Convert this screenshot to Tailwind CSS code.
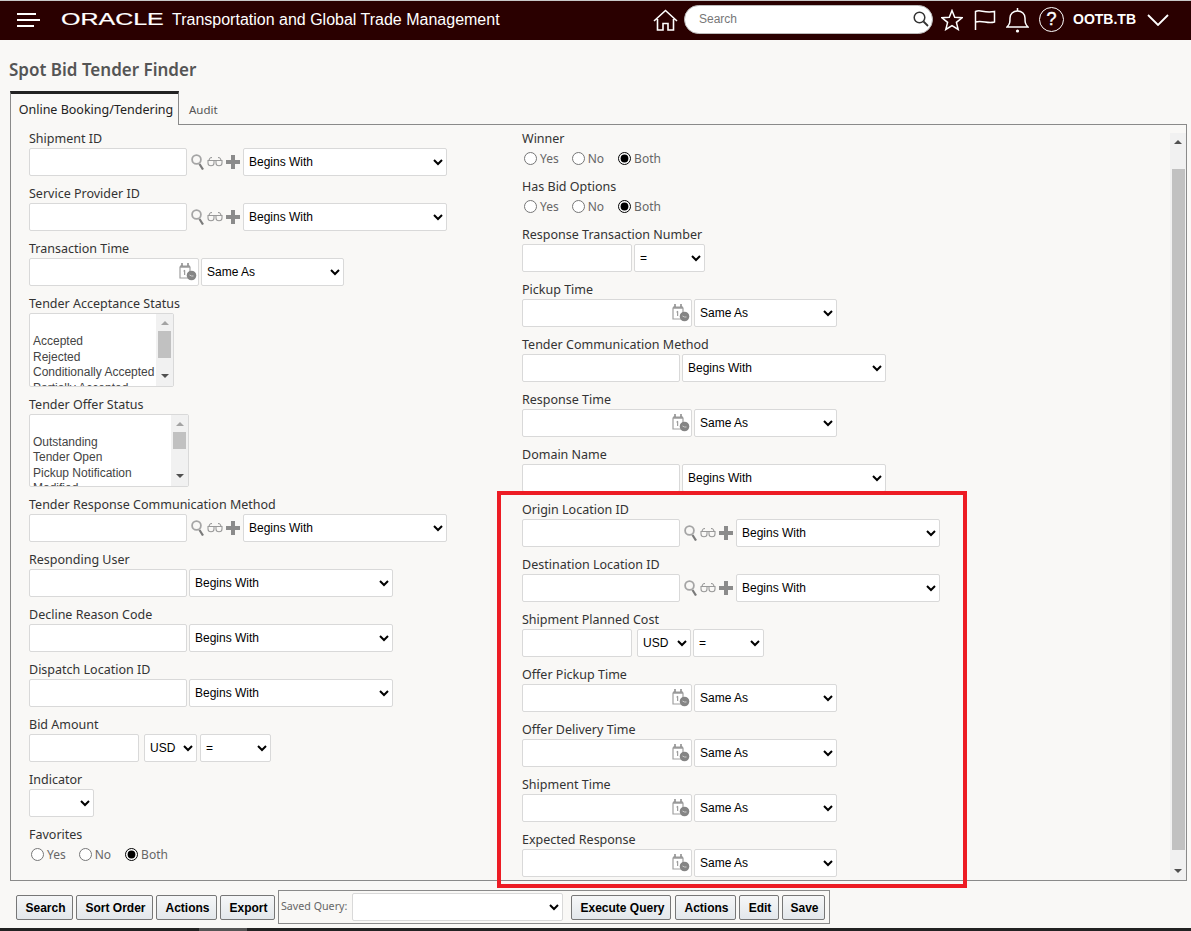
<!DOCTYPE html>
<html lang="en">
<head>
  <meta charset="UTF-8" />
  <title>Spot Bid Tender Finder</title>
  <script src="https://cdn.jsdelivr.net/npm/@tailwindcss/browser@4"></script>
</head>
<body class="bg-[#f9f8f6] font-['Noto_Sans',sans-serif] text-[12.5px] text-[#333]">
  <!-- shared icons -->
  <svg class="hidden">
    <symbol id="i-mag" viewBox="0 0 13 16"><circle cx="5.5" cy="5.5" r="4.4" fill="none" stroke="#a5a5a5" stroke-width="1.800"/><path d="M8.500 10l3.500 5.500" stroke="#7a7a7a" stroke-width="2.200"/></symbol>
    <symbol id="i-glasses" viewBox="0 0 16 10"><path d="M.5 3.500h15M2 3.500c0-1.500 1.500-3 3-3M14 3.500c0-1.500-1.500-3-3-3M1 3.500h6v2.500c0 3.700-6 3.700-6 0zM9 3.500h6v2.500c0 3.700-6 3.700-6 0z" fill="none" stroke="#9a9a9a" stroke-width="1.100"/></symbol>
    <symbol id="i-plus" viewBox="0 0 14 14"><path d="M5 0h4v5h5v4H9v5H5V9H0V5h5z" fill="#8b8b8b"/></symbol>
    <symbol id="i-cal" viewBox="0 0 18 18"><path d="M1 4h10v11H1z" fill="none" stroke="#a0a0a0" stroke-width="1.200"/><path d="M1 2.500h10v2H1z" fill="#999"/><path d="M3 0v3M9 0v3" stroke="#888" stroke-width="1.500"/><path d="M4.500 8l1.200-.7V12" fill="none" stroke="#888"/><circle cx="12.500" cy="12.500" r="4.800" fill="#858585"/><path d="M10.500 12l2 1h2" fill="none" stroke="#ccc"/></symbol>
  </svg>

  <div class="relative flex h-[931px] flex-col overflow-hidden">
    <!-- Header -->
    <header class="flex h-[40px] shrink-0 items-center border-t border-[#c8c8c8] bg-[#2a0000] pb-[2px] text-white">
      <svg class="ml-[17px] h-[16px] w-[23px]" viewBox="0 0 23 16"><path d="M0 2h19M0 8h23M0 14h17" stroke="#fff" stroke-width="2"/></svg>
      <div class="ml-[21px] w-[103px] font-['Liberation_Sans',sans-serif] text-[17px] leading-none [-webkit-text-stroke:0.2px_white]"><span class="inline-block origin-left scale-x-[1.47]">ORACLE</span></div>
      <div class="ml-[8px] font-['Liberation_Sans',sans-serif] text-[16px]">Transportation and Global Trade Management</div>
      <svg class="ml-auto h-[22px] w-[25px]" viewBox="0 0 25 22"><path d="M1 12L12.500 1.500 24 12M4.500 10v11h5.500v-6.500h5V21h5.500V10" fill="none" stroke="#fff" stroke-width="1.600"/></svg>
      <div class="ml-[6px] flex h-[29px] w-[249px] items-center rounded-full border border-[#bbb] bg-white pb-[1px] pl-[14px] pr-[3px] font-['Liberation_Sans',sans-serif] text-[12px] text-[#777]">
        Search
        <svg class="ml-auto h-[16px] w-[16px]" viewBox="0 0 16 16"><circle cx="6.500" cy="6.500" r="5.300" fill="none" stroke="#333" stroke-width="1.500"/><path d="M10.500 10.500l4.500 4.500" stroke="#333" stroke-width="1.800"/></svg>
      </div>
      <svg class="ml-[8px] h-[22px] w-[22px]" viewBox="0 0 22 22"><path d="M11 1.500l2.700 6.800 7.300.5-5.600 4.600 1.800 7.100-6.200-3.900-6.200 3.900 1.800-7.100L1 8.800l7.300-.5z" fill="none" stroke="#fff" stroke-width="1.500"/></svg>
      <svg class="ml-[11px] h-[22px] w-[22px]" viewBox="0 0 22 22"><path d="M1.500 21V2.500c5-2.500 7.500 1.800 19 0V13c-7 2-12-2-19 0" fill="none" stroke="#fff" stroke-width="1.500"/></svg>
      <svg class="ml-[10px] h-[26px] w-[23px]" viewBox="0 0 23 26"><path d="M1 20c3-3 3-5 3-9 0-4 3-7 7.500-7s7.500 3 7.500 7c0 4 0 6 3 9z" fill="none" stroke="#fff" stroke-width="1.500"/><path d="M11.500 1v3" stroke="#fff" stroke-width="1.500"/><circle cx="11.500" cy="24" r="1.600" fill="#fff"/></svg>
      <div class="ml-[10px] flex h-[25px] w-[25px] items-center justify-center rounded-full border-[1.500px] border-white font-['Liberation_Sans',sans-serif] text-[18px] [-webkit-text-stroke:0.4px_white]">?</div>
      <div class="ml-[9px] font-['Liberation_Sans',sans-serif] text-[14px] font-bold">OOTB.TB</div>
      <svg class="ml-[11px] mr-[22px] h-[12px] w-[22px]" viewBox="0 0 22 12"><path d="M1 1l10 10L21 1" fill="none" stroke="#fff" stroke-width="1.800"/></svg>
    </header>

    <!-- Title -->
    <h1 class="flex h-[51px] shrink-0 items-center pl-[9px] pt-[8px] text-[17px] font-semibold text-[#555]">Spot Bid Tender Finder</h1>

    <!-- Tabs -->
    <div class="relative z-10 -mb-px flex h-[34px] shrink-0 pl-[10px]">
      <div class="flex w-[169px] items-center justify-center border-x border-t-[3px] border-x-[#8a8a8a] border-t-[#222] bg-[#f9f8f6] pl-[3px] pt-[2px] text-[#222]">Online Booking/Tendering</div>
      <div class="flex items-center pl-[10px] pt-[4px] text-[11.5px] text-[#555]">Audit</div>
    </div>

    <!-- Form panel -->
    <main class="ml-[10px] flex h-[757px] w-[1177px] shrink-0 border border-[#8a8a8a]">
      <div class="flex flex-1 pl-[18px] pt-[3px]">
        <!-- left column -->
        <div class="w-[493px]">
          <div class="mb-[7px]">
            <label class="block h-5 leading-[22px]">Shipment ID</label>
            <div class="flex items-center">
              <input class="h-7 w-[158px] rounded-[2px] border border-[#d9d9d9] bg-white" />
              <svg class="ml-[4px] h-[16px] w-[13px]"><use href="#i-mag"/></svg>
              <svg class="ml-[3px] h-[10px] w-[16px]"><use href="#i-glasses"/></svg>
              <svg class="ml-[3px] h-[14px] w-[14px]"><use href="#i-plus"/></svg>
              <select class="ml-[3px] h-7 w-[204px] rounded-[2px] border border-[#d9d9d9] bg-white pl-[1px] font-['Liberation_Sans',sans-serif] text-[12px] text-black"><option>Begins With</option></select>
            </div>
          </div>
          <div class="mb-[7px]">
            <label class="block h-5 leading-[22px]">Service Provider ID</label>
            <div class="flex items-center">
              <input class="h-7 w-[158px] rounded-[2px] border border-[#d9d9d9] bg-white" />
              <svg class="ml-[4px] h-[16px] w-[13px]"><use href="#i-mag"/></svg>
              <svg class="ml-[3px] h-[10px] w-[16px]"><use href="#i-glasses"/></svg>
              <svg class="ml-[3px] h-[14px] w-[14px]"><use href="#i-plus"/></svg>
              <select class="ml-[3px] h-7 w-[204px] rounded-[2px] border border-[#d9d9d9] bg-white pl-[1px] font-['Liberation_Sans',sans-serif] text-[12px] text-black"><option>Begins With</option></select>
            </div>
          </div>
          <div class="mb-[7px]">
            <label class="block h-5 leading-[22px]">Transaction Time</label>
            <div class="flex items-center">
              <div class="relative">
                <input class="block h-7 w-[170px] rounded-[2px] border border-[#d9d9d9] bg-white" />
                <svg class="absolute right-[2px] top-[5px] h-[18px] w-[18px]"><use href="#i-cal"/></svg>
              </div>
              <select class="ml-[2px] h-7 w-[143px] rounded-[2px] border border-[#d9d9d9] bg-white pl-[1px] font-['Liberation_Sans',sans-serif] text-[12px] text-black"><option>Same As</option></select>
            </div>
          </div>
          <div class="mb-[7px]">
            <label class="block h-5 leading-[22px]">Tender Acceptance Status</label>
            <div class="flex h-[74px] w-[145px] overflow-hidden rounded-[2px] border border-[#d9d9d9] bg-white font-['Liberation_Sans',sans-serif] text-[12px] leading-[15.500px] text-[#444]">
              <div class="flex-1 pl-[3px] pt-[20px]">
                <div>Accepted</div>
                <div>Rejected</div>
                <div class="whitespace-nowrap">Conditionally Accepted</div>
                <div>Partially Accepted</div>
              </div>
              <div class="flex w-[17px] shrink-0 flex-col items-center bg-[#f1f1f1]">
                <div class="mt-[7px] h-0 w-0 border-x-[4px] border-b-[4px] border-x-transparent border-b-[#a3a3a3]"></div>
                <div class="mt-[6px] h-[27px] w-[13px] bg-[#c1c1c1]"></div>
                <div class="mt-[16px] h-0 w-0 border-x-[4px] border-t-[4px] border-x-transparent border-t-[#505050]"></div>
              </div>
            </div>
          </div>
          <div class="mb-[7px]">
            <label class="block h-5 leading-[22px]">Tender Offer Status</label>
            <div class="flex h-[73px] w-[160px] overflow-hidden rounded-[2px] border border-[#d9d9d9] bg-white font-['Liberation_Sans',sans-serif] text-[12px] leading-[15.500px] text-[#444]">
              <div class="flex-1 pl-[3px] pt-[19.500px]">
                <div>Outstanding</div>
                <div>Tender Open</div>
                <div>Pickup Notification</div>
                <div>Modified</div>
              </div>
              <div class="flex w-[17px] shrink-0 flex-col items-center bg-[#f1f1f1]">
                <div class="mt-[7px] h-0 w-0 border-x-[4px] border-b-[4px] border-x-transparent border-b-[#a3a3a3]"></div>
                <div class="mt-[6px] h-[17px] w-[13px] bg-[#c1c1c1]"></div>
                <div class="mt-[25px] h-0 w-0 border-x-[4px] border-t-[4px] border-x-transparent border-t-[#505050]"></div>
              </div>
            </div>
          </div>
          <div class="mb-[7px]">
            <label class="block h-5 leading-[22px]">Tender Response Communication Method</label>
            <div class="flex items-center">
              <input class="h-7 w-[158px] rounded-[2px] border border-[#d9d9d9] bg-white" />
              <svg class="ml-[4px] h-[16px] w-[13px]"><use href="#i-mag"/></svg>
              <svg class="ml-[3px] h-[10px] w-[16px]"><use href="#i-glasses"/></svg>
              <svg class="ml-[3px] h-[14px] w-[14px]"><use href="#i-plus"/></svg>
              <select class="ml-[3px] h-7 w-[204px] rounded-[2px] border border-[#d9d9d9] bg-white pl-[1px] font-['Liberation_Sans',sans-serif] text-[12px] text-black"><option>Begins With</option></select>
            </div>
          </div>
          <div class="mb-[7px]">
            <label class="block h-5 leading-[22px]">Responding User</label>
            <div class="flex items-center">
              <input class="h-7 w-[158px] rounded-[2px] border border-[#d9d9d9] bg-white" />
              <select class="ml-[2px] h-7 w-[204px] rounded-[2px] border border-[#d9d9d9] bg-white pl-[1px] font-['Liberation_Sans',sans-serif] text-[12px] text-black"><option>Begins With</option></select>
            </div>
          </div>
          <div class="mb-[7px]">
            <label class="block h-5 leading-[22px]">Decline Reason Code</label>
            <div class="flex items-center">
              <input class="h-7 w-[158px] rounded-[2px] border border-[#d9d9d9] bg-white" />
              <select class="ml-[2px] h-7 w-[204px] rounded-[2px] border border-[#d9d9d9] bg-white pl-[1px] font-['Liberation_Sans',sans-serif] text-[12px] text-black"><option>Begins With</option></select>
            </div>
          </div>
          <div class="mb-[7px]">
            <label class="block h-5 leading-[22px]">Dispatch Location ID</label>
            <div class="flex items-center">
              <input class="h-7 w-[158px] rounded-[2px] border border-[#d9d9d9] bg-white" />
              <select class="ml-[2px] h-7 w-[204px] rounded-[2px] border border-[#d9d9d9] bg-white pl-[1px] font-['Liberation_Sans',sans-serif] text-[12px] text-black"><option>Begins With</option></select>
            </div>
          </div>
          <div class="mb-[7px]">
            <label class="block h-5 leading-[22px]">Bid Amount</label>
            <div class="flex items-center">
              <input class="h-7 w-[110px] rounded-[2px] border border-[#d9d9d9] bg-white" />
              <select class="ml-[5px] h-7 w-[53px] rounded-[2px] border border-[#d9d9d9] bg-white pl-[1px] font-['Liberation_Sans',sans-serif] text-[12px] text-black"><option>USD</option></select>
              <select class="ml-[3px] h-7 w-[71px] rounded-[2px] border border-[#d9d9d9] bg-white pl-[1px] font-['Liberation_Sans',sans-serif] text-[12px] text-black"><option>=</option></select>
            </div>
          </div>
          <div class="mb-[7px]">
            <label class="block h-5 leading-[22px]">Indicator</label>
            <select class="block h-7 w-[65px] rounded-[2px] border border-[#d9d9d9] bg-white font-['Liberation_Sans',sans-serif] text-[12px] text-black"><option></option></select>
          </div>
          <div>
            <label class="block h-5 leading-[22px]">Favorites</label>
            <div class="flex h-5 items-center text-[12px] leading-5 text-[#666]">
              <input type="radio" name="fav" class="ml-[2px] mr-[3px] h-[13px] w-[13px] accent-black" /><span class="pt-[2px]">Yes</span>
              <input type="radio" name="fav" class="ml-[13px] mr-[3px] h-[13px] w-[13px] accent-black" /><span class="pt-[2px]">No</span>
              <input type="radio" name="fav" checked class="ml-[14px] mr-[3px] h-[13px] w-[13px] accent-black" /><span class="pt-[2px]">Both</span>
            </div>
          </div>
        </div>

        <!-- right column -->
        <div class="flex-1">
          <div class="mb-[8px]">
            <label class="block h-5 leading-[22px]">Winner</label>
            <div class="flex h-5 items-center text-[12px] leading-5 text-[#666]">
              <input type="radio" name="win" class="ml-[2px] mr-[3px] h-[13px] w-[13px] accent-black" /><span class="pt-[2px]">Yes</span>
              <input type="radio" name="win" class="ml-[13px] mr-[3px] h-[13px] w-[13px] accent-black" /><span class="pt-[2px]">No</span>
              <input type="radio" name="win" checked class="ml-[14px] mr-[3px] h-[13px] w-[13px] accent-black" /><span class="pt-[2px]">Both</span>
            </div>
          </div>
          <div class="mb-[8px]">
            <label class="block h-5 leading-[22px]">Has Bid Options</label>
            <div class="flex h-5 items-center text-[12px] leading-5 text-[#666]">
              <input type="radio" name="opt" class="ml-[2px] mr-[3px] h-[13px] w-[13px] accent-black" /><span class="pt-[2px]">Yes</span>
              <input type="radio" name="opt" class="ml-[13px] mr-[3px] h-[13px] w-[13px] accent-black" /><span class="pt-[2px]">No</span>
              <input type="radio" name="opt" checked class="ml-[14px] mr-[3px] h-[13px] w-[13px] accent-black" /><span class="pt-[2px]">Both</span>
            </div>
          </div>
          <div class="mb-[7px]">
            <label class="block h-5 leading-[22px]">Response Transaction Number</label>
            <div class="flex items-center">
              <input class="h-7 w-[110px] rounded-[2px] border border-[#d9d9d9] bg-white" />
              <select class="ml-[2px] h-7 w-[71px] rounded-[2px] border border-[#d9d9d9] bg-white pl-[1px] font-['Liberation_Sans',sans-serif] text-[12px] text-black"><option>=</option></select>
            </div>
          </div>
          <div class="mb-[7px]">
            <label class="block h-5 leading-[22px]">Pickup Time</label>
            <div class="flex items-center">
              <div class="relative">
                <input class="block h-7 w-[170px] rounded-[2px] border border-[#d9d9d9] bg-white" />
                <svg class="absolute right-[2px] top-[5px] h-[18px] w-[18px]"><use href="#i-cal"/></svg>
              </div>
              <select class="ml-[2px] h-7 w-[143px] rounded-[2px] border border-[#d9d9d9] bg-white pl-[1px] font-['Liberation_Sans',sans-serif] text-[12px] text-black"><option>Same As</option></select>
            </div>
          </div>
          <div class="mb-[7px]">
            <label class="block h-5 leading-[22px]">Tender Communication Method</label>
            <div class="flex items-center">
              <input class="h-7 w-[158px] rounded-[2px] border border-[#d9d9d9] bg-white" />
              <select class="ml-[2px] h-7 w-[204px] rounded-[2px] border border-[#d9d9d9] bg-white pl-[1px] font-['Liberation_Sans',sans-serif] text-[12px] text-black"><option>Begins With</option></select>
            </div>
          </div>
          <div class="mb-[7px]">
            <label class="block h-5 leading-[22px]">Response Time</label>
            <div class="flex items-center">
              <div class="relative">
                <input class="block h-7 w-[170px] rounded-[2px] border border-[#d9d9d9] bg-white" />
                <svg class="absolute right-[2px] top-[5px] h-[18px] w-[18px]"><use href="#i-cal"/></svg>
              </div>
              <select class="ml-[2px] h-7 w-[143px] rounded-[2px] border border-[#d9d9d9] bg-white pl-[1px] font-['Liberation_Sans',sans-serif] text-[12px] text-black"><option>Same As</option></select>
            </div>
          </div>
          <div class="mb-[7px]">
            <label class="block h-5 leading-[22px]">Domain Name</label>
            <div class="flex items-center">
              <input class="h-7 w-[158px] rounded-[2px] border border-[#d9d9d9] bg-white" />
              <select class="ml-[2px] h-7 w-[204px] rounded-[2px] border border-[#d9d9d9] bg-white pl-[1px] font-['Liberation_Sans',sans-serif] text-[12px] text-black"><option>Begins With</option></select>
            </div>
          </div>
          <div class="mb-[7px]">
            <label class="block h-5 leading-[22px]">Origin Location ID</label>
            <div class="flex items-center">
              <input class="h-7 w-[158px] rounded-[2px] border border-[#d9d9d9] bg-white" />
              <svg class="ml-[4px] h-[16px] w-[13px]"><use href="#i-mag"/></svg>
              <svg class="ml-[3px] h-[10px] w-[16px]"><use href="#i-glasses"/></svg>
              <svg class="ml-[3px] h-[14px] w-[14px]"><use href="#i-plus"/></svg>
              <select class="ml-[3px] h-7 w-[204px] rounded-[2px] border border-[#d9d9d9] bg-white pl-[1px] font-['Liberation_Sans',sans-serif] text-[12px] text-black"><option>Begins With</option></select>
            </div>
          </div>
          <div class="mb-[7px]">
            <label class="block h-5 leading-[22px]">Destination Location ID</label>
            <div class="flex items-center">
              <input class="h-7 w-[158px] rounded-[2px] border border-[#d9d9d9] bg-white" />
              <svg class="ml-[4px] h-[16px] w-[13px]"><use href="#i-mag"/></svg>
              <svg class="ml-[3px] h-[10px] w-[16px]"><use href="#i-glasses"/></svg>
              <svg class="ml-[3px] h-[14px] w-[14px]"><use href="#i-plus"/></svg>
              <select class="ml-[3px] h-7 w-[204px] rounded-[2px] border border-[#d9d9d9] bg-white pl-[1px] font-['Liberation_Sans',sans-serif] text-[12px] text-black"><option>Begins With</option></select>
            </div>
          </div>
          <div class="mb-[7px]">
            <label class="block h-5 leading-[22px]">Shipment Planned Cost</label>
            <div class="flex items-center">
              <input class="h-7 w-[110px] rounded-[2px] border border-[#d9d9d9] bg-white" />
              <select class="ml-[5px] h-7 w-[54px] rounded-[2px] border border-[#d9d9d9] bg-white pl-[1px] font-['Liberation_Sans',sans-serif] text-[12px] text-black"><option>USD</option></select>
              <select class="ml-[2px] h-7 w-[71px] rounded-[2px] border border-[#d9d9d9] bg-white pl-[1px] font-['Liberation_Sans',sans-serif] text-[12px] text-black"><option>=</option></select>
            </div>
          </div>
          <div class="mb-[7px]">
            <label class="block h-5 leading-[22px]">Offer Pickup Time</label>
            <div class="flex items-center">
              <div class="relative">
                <input class="block h-7 w-[170px] rounded-[2px] border border-[#d9d9d9] bg-white" />
                <svg class="absolute right-[2px] top-[5px] h-[18px] w-[18px]"><use href="#i-cal"/></svg>
              </div>
              <select class="ml-[2px] h-7 w-[143px] rounded-[2px] border border-[#d9d9d9] bg-white pl-[1px] font-['Liberation_Sans',sans-serif] text-[12px] text-black"><option>Same As</option></select>
            </div>
          </div>
          <div class="mb-[7px]">
            <label class="block h-5 leading-[22px]">Offer Delivery Time</label>
            <div class="flex items-center">
              <div class="relative">
                <input class="block h-7 w-[170px] rounded-[2px] border border-[#d9d9d9] bg-white" />
                <svg class="absolute right-[2px] top-[5px] h-[18px] w-[18px]"><use href="#i-cal"/></svg>
              </div>
              <select class="ml-[2px] h-7 w-[143px] rounded-[2px] border border-[#d9d9d9] bg-white pl-[1px] font-['Liberation_Sans',sans-serif] text-[12px] text-black"><option>Same As</option></select>
            </div>
          </div>
          <div class="mb-[7px]">
            <label class="block h-5 leading-[22px]">Shipment Time</label>
            <div class="flex items-center">
              <div class="relative">
                <input class="block h-7 w-[170px] rounded-[2px] border border-[#d9d9d9] bg-white" />
                <svg class="absolute right-[2px] top-[5px] h-[18px] w-[18px]"><use href="#i-cal"/></svg>
              </div>
              <select class="ml-[2px] h-7 w-[143px] rounded-[2px] border border-[#d9d9d9] bg-white pl-[1px] font-['Liberation_Sans',sans-serif] text-[12px] text-black"><option>Same As</option></select>
            </div>
          </div>
          <div>
            <label class="block h-5 leading-[22px]">Expected Response</label>
            <div class="flex items-center">
              <div class="relative">
                <input class="block h-7 w-[170px] rounded-[2px] border border-[#d9d9d9] bg-white" />
                <svg class="absolute right-[2px] top-[5px] h-[18px] w-[18px]"><use href="#i-cal"/></svg>
              </div>
              <select class="ml-[2px] h-7 w-[143px] rounded-[2px] border border-[#d9d9d9] bg-white pl-[1px] font-['Liberation_Sans',sans-serif] text-[12px] text-black"><option>Same As</option></select>
            </div>
          </div>
        </div>
      </div>

      <!-- panel scrollbar -->
      <div class="mt-[8px] flex w-[16px] shrink-0 flex-col items-center bg-[#f1f1f1]">
        <div class="mt-[7px] h-0 w-0 border-x-[4px] border-b-[4px] border-x-transparent border-b-[#505050]"></div>
        <div class="mt-[25px] h-[681px] w-[13px] bg-[#c1c1c1]"></div>
        <div class="mt-[19px] h-0 w-0 border-x-[4px] border-t-[4px] border-x-transparent border-t-[#505050]"></div>
      </div>
    </main>

    <!-- Toolbar -->
    <div class="flex h-[47px] shrink-0 items-center pl-[16px] pt-[4px] font-['Liberation_Sans',sans-serif] text-[12px] font-bold text-black">
      <button class="mt-[1px] h-[25px] w-[57px] rounded-[2px] border border-[#777] bg-gradient-to-b from-[#f6f7f8] to-[#e3e7eb] pl-[2px] pt-[2px]">Search</button>
      <button class="ml-[3px] mt-[1px] h-[25px] w-[77px] rounded-[2px] border border-[#777] bg-gradient-to-b from-[#f6f7f8] to-[#e3e7eb] pl-[2px] pt-[2px]">Sort Order</button>
      <button class="ml-[3px] mt-[1px] h-[25px] w-[61px] rounded-[2px] border border-[#777] bg-gradient-to-b from-[#f6f7f8] to-[#e3e7eb] pl-[2px] pt-[2px]">Actions</button>
      <button class="ml-[3px] mt-[1px] h-[25px] w-[55px] rounded-[2px] border border-[#777] bg-gradient-to-b from-[#f6f7f8] to-[#e3e7eb] pl-[2px] pt-[2px]">Export</button>
      <div class="ml-[3px] flex h-[34px] w-[552px] items-center border border-[#8a8a8a]">
        <span class="ml-[2px] w-[68px] shrink-0 font-['Noto_Sans',sans-serif] text-[10.7px] font-normal text-[#666]">Saved Query:</span>
        <select class="ml-[3px] h-7 w-[211px] rounded-[2px] border border-[#d9d9d9] bg-white text-[12px] font-normal"><option></option></select>
        <button class="ml-[8px] mt-[1px] h-[25px] w-[100px] rounded-[2px] border border-[#777] bg-gradient-to-b from-[#f6f7f8] to-[#e3e7eb] pl-[3px] pt-[2px]">Execute Query</button>
        <button class="ml-[4px] mt-[1px] h-[25px] w-[61px] rounded-[2px] border border-[#777] bg-gradient-to-b from-[#f6f7f8] to-[#e3e7eb] pl-[2px] pt-[2px]">Actions</button>
        <button class="ml-[3px] mt-[1px] h-[25px] w-[40px] rounded-[2px] border border-[#777] bg-gradient-to-b from-[#f6f7f8] to-[#e3e7eb] pl-[2px] pt-[2px]">Edit</button>
        <button class="ml-[3px] mt-[1px] h-[25px] w-[43px] rounded-[2px] border border-[#777] bg-gradient-to-b from-[#f6f7f8] to-[#e3e7eb] pl-[2px] pt-[2px]">Save</button>
      </div>
    </div>

    <!-- window scrollbar strip -->
    <div class="flex h-[3px] shrink-0 bg-[#222]">
      <div class="ml-[199px] w-[48px] bg-[#555]"></div>
    </div>

    <!-- red annotation over the form -->
    <div class="pointer-events-none absolute left-[497px] top-[491px] h-[397px] w-[470px] border-4 border-[#ed1c24]"></div>
  </div>
</body>
</html>
